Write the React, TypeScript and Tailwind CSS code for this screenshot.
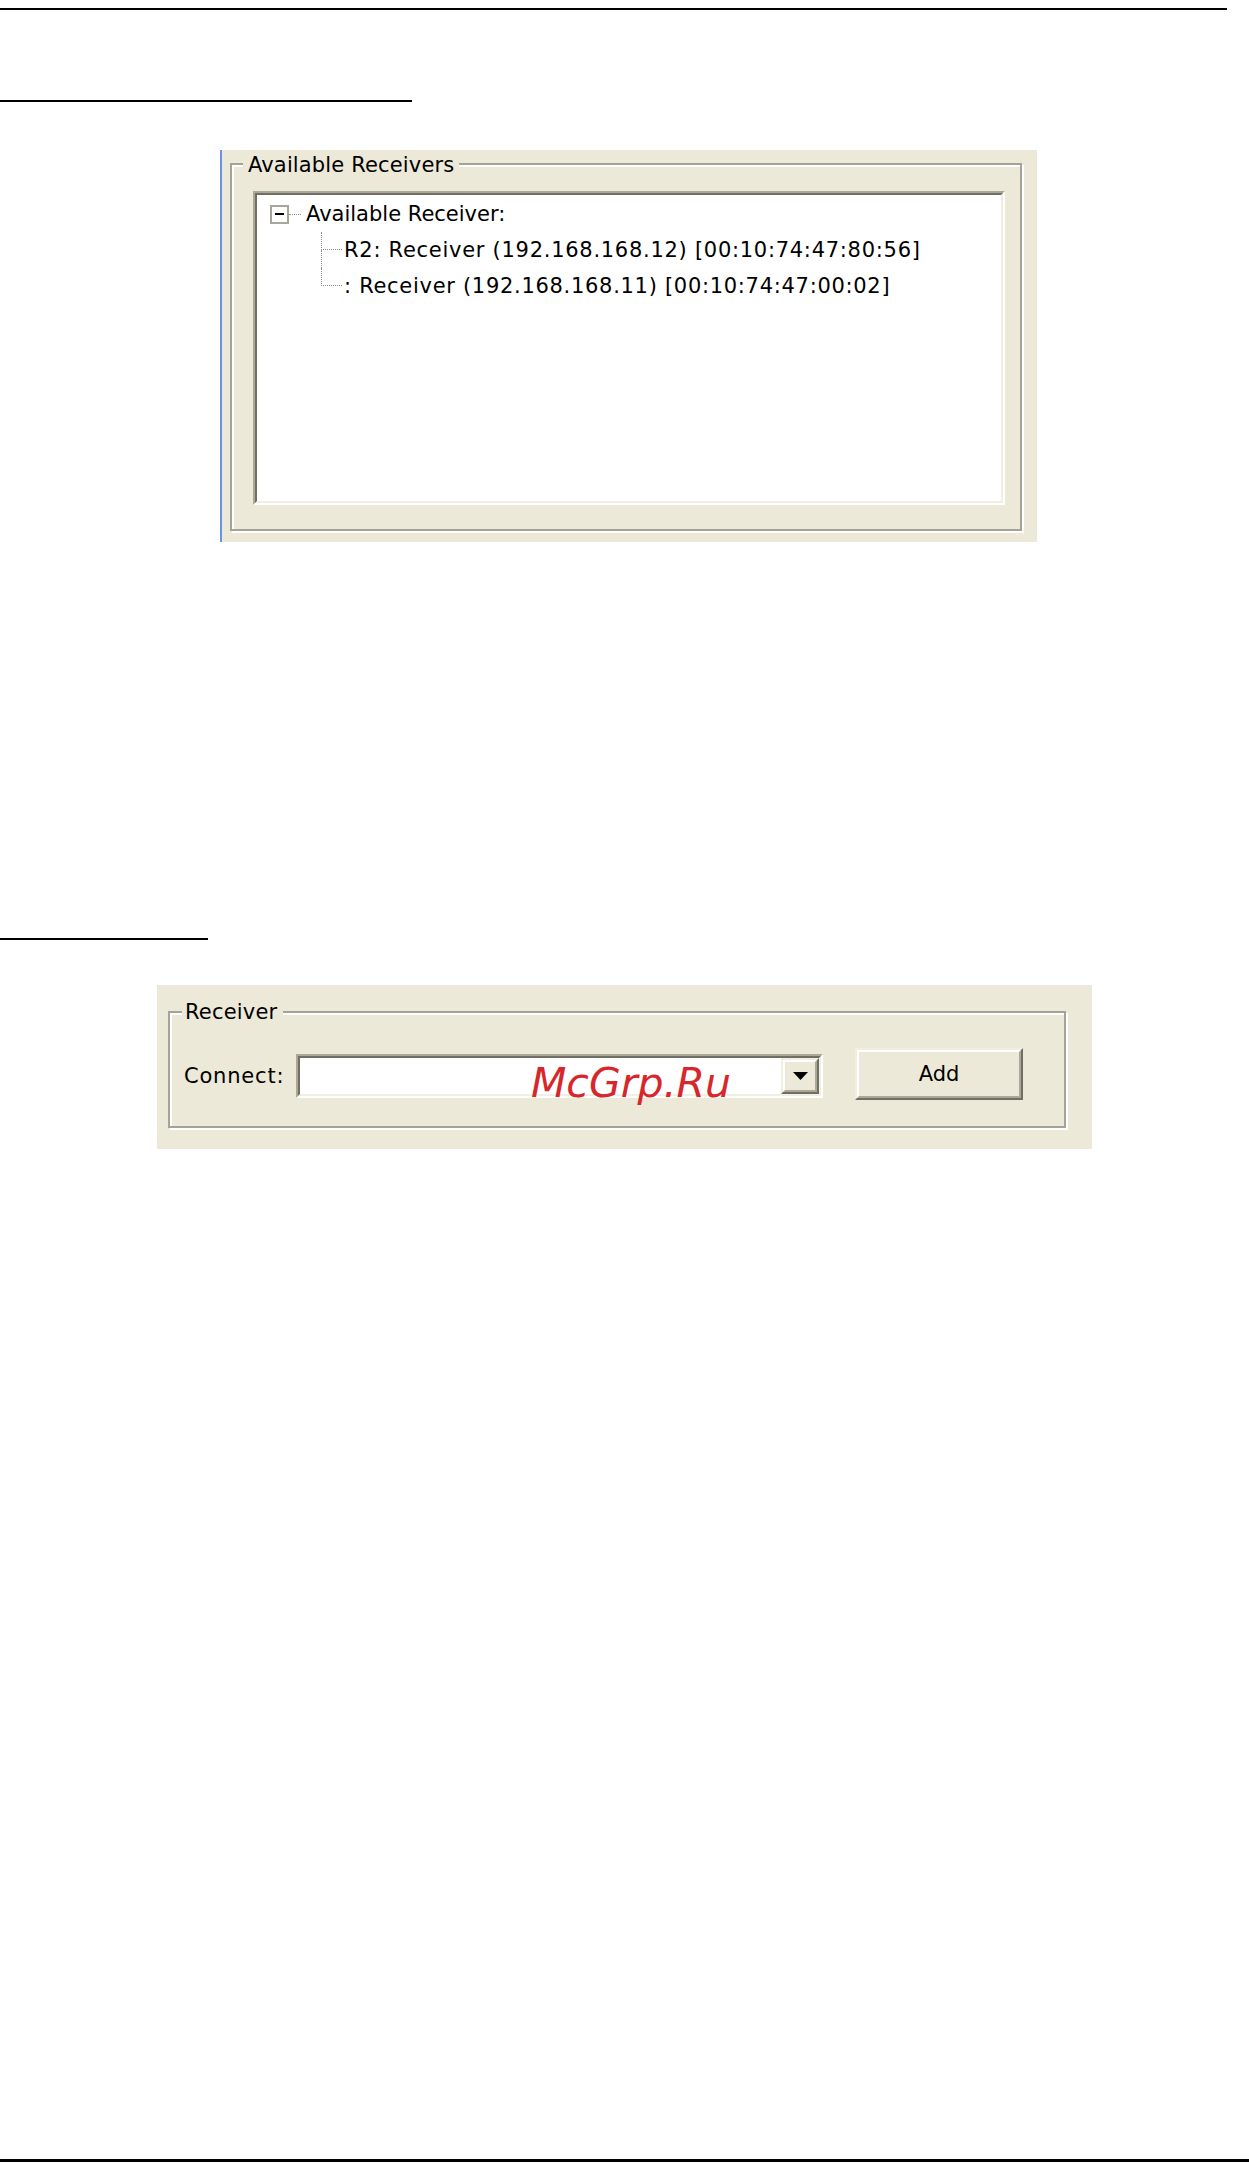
import React from "react"

type BoxProps = {
  className?: string
  children?: React.ReactNode
}

// sunken 3D frame, two 2px rings like the XP classic listbox
function Sunken(props: BoxProps) {
  return (
    <div className={"border-2 border-t-[#aca899] border-l-[#aca899] border-r-white border-b-white " + (props.className || "")}>
      <div className="h-full w-full border-2 border-t-[#716f64] border-l-[#716f64] border-r-[#f1efe2] border-b-[#f1efe2] bg-white">
        {props.children}
      </div>
    </div>
  )
}

// raised 3D frame for buttons
function Raised(props: BoxProps) {
  return (
    <div className={"border-2 border-t-[#f1efe2] border-l-[#f1efe2] border-r-[#716f64] border-b-[#716f64] " + (props.className || "")}>
      <div className="flex h-full w-full items-center justify-center border-2 border-t-white border-l-white border-r-[#aca899] border-b-[#aca899] bg-[#ece9d8]">
        {props.children}
      </div>
    </div>
  )
}

type RowProps = {
  text: string
  last?: boolean
  track: string
}

function Leaf(props: RowProps) {
  return (
    <div className="flex h-[36px] pl-[64px]">
      <div className="flex w-[21px] flex-col">
        <div className="h-1/2 border-l border-b border-dotted border-[#8e8e8e]" />
        <div className={props.last ? "h-1/2" : "h-1/2 border-l border-dotted border-[#8e8e8e]"} />
      </div>
      <span className={"ml-[2px] self-center whitespace-nowrap " + props.track}>{props.text}</span>
    </div>
  )
}

export default function App() {
  return (
    <div className="relative h-[2164px] w-[1249px] overflow-hidden bg-white font-['DejaVu_Sans',sans-serif] text-[21px] leading-none text-black">
      <div className="mt-[8px] h-[2px] w-[1227px] bg-black" />

      <div className="mt-[90px] h-[2px] w-[412px] bg-black" />

      {/* Available Receivers panel */}
      <div className="ml-[220px] mt-[48px] flex h-[392px] w-[817px]">
        <div className="w-[2px] bg-[#6b93e4]" />
        <div className="flex-1 bg-[#ece9d8] pl-[8px] pt-[13px]">
          <div className="relative h-[368px] w-[792px] border-2 border-[#a5a397] shadow-[2px_2px_0_#ffffff,inset_2px_2px_0_#ffffff]">
            <span className="absolute left-[11px] top-[-10px] bg-[#ece9d8] px-[5px] leading-[21px] tracking-[0.15px] whitespace-nowrap">
              Available Receivers
            </span>
            <Sunken className="ml-[21px] mt-[26px] h-[314px] w-[752px]">
              <div className="pt-[1px]">
                <div className="flex h-[36px] items-center pl-[13px]">
                  <div className="flex h-[19px] w-[19px] items-center justify-center border-2 border-[#a8a699] bg-white">
                    <div className="h-[2px] w-[9px] bg-black" />
                  </div>
                  <div className="w-[12px] border-t border-dotted border-[#8e8e8e]" />
                  <span className="ml-[5px] whitespace-nowrap">Available Receiver:</span>
                </div>
                <Leaf text="R2: Receiver (192.168.168.12) [00:10:74:47:80:56]" track="tracking-[0.72px]" />
                <Leaf text=": Receiver (192.168.168.11) [00:10:74:47:00:02]" track="tracking-[0.7px]" last />
              </div>
            </Sunken>
          </div>
        </div>
      </div>

      <div className="mt-[396px] h-[2px] w-[208px] bg-black" />

      {/* Receiver panel */}
      <div className="ml-[157px] mt-[45px] h-[164px] w-[935px] bg-[#ece9d8] pl-[11px] pt-[26px]">
        <div className="relative h-[117px] w-[898px] border-2 border-[#a5a397] shadow-[2px_2px_0_#ffffff,inset_2px_2px_0_#ffffff]">
          <span className="absolute left-[12px] top-[-11px] bg-[#ece9d8] pl-[3px] pr-[6px] leading-[21px] tracking-[0.2px] whitespace-nowrap">
            Receiver
          </span>
          <div className="mt-[35px] flex h-[52px] items-center pl-[14px]">
            <span className="mt-[4px] w-[112px] whitespace-nowrap tracking-[0.8px]">Connect:</span>
            <Sunken className="mt-[4px] h-[44px] w-[527px]">
              <div className="flex h-full justify-end">
                <Raised className="h-full w-[38px]">
                  <svg width="15" height="8" viewBox="0 0 15 8">
                    <polygon points="0,0 15,0 7.5,8" fill="#000" />
                  </svg>
                </Raised>
              </div>
            </Sunken>
            <Raised className="ml-[32px] h-[52px] w-[168px]">
              <span>Add</span>
            </Raised>
          </div>
        </div>
      </div>

      <div className="mt-[1010px] h-[3px] w-full bg-black" />

      {/* watermark over the combo box */}
      <span className="absolute left-[531px] top-[1063px] text-[41px] italic leading-none text-[#d7272c]">
        McGrp.Ru
      </span>
    </div>
  )
}
